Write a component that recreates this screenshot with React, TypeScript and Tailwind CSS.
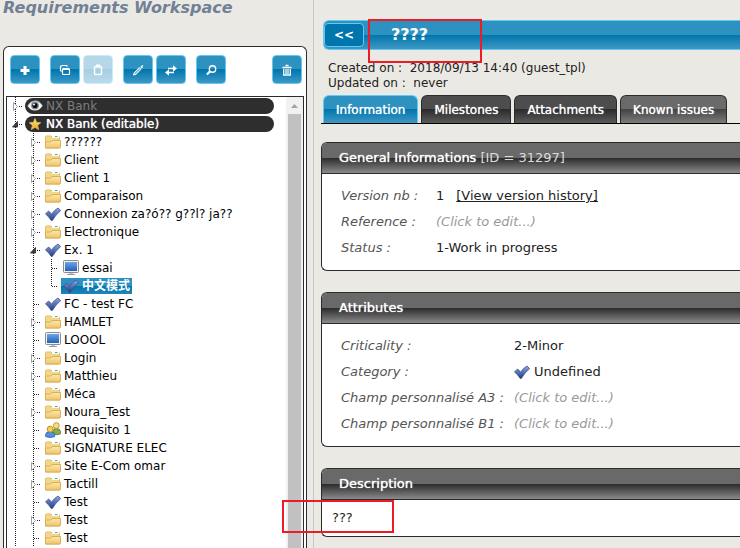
import type {ReactNode} from "react";
import clsx from "clsx";

type IconName = "folder" | "check" | "screen" | "users" | "eye" | "star";
type Toggle = "open" | "closed" | "none";

type Node = {
  label: string;
  icon: IconName;
  toggle: Toggle;
  level: number;
  last?: boolean;
  selected?: boolean;
};

const projects = [
  {label: "NX Bank", icon: "eye", toggle: "closed", muted: true},
  {label: "NX Bank (editable)", icon: "star", toggle: "open", muted: false}
] as const;

const nodes: Node[] = [
  {label: "??????", icon: "folder", toggle: "closed", level: 2},
  {label: "Client", icon: "folder", toggle: "closed", level: 2},
  {label: "Client 1", icon: "folder", toggle: "closed", level: 2},
  {label: "Comparaison", icon: "folder", toggle: "closed", level: 2},
  {label: "Connexion za?ó?? g??l? ja??", icon: "check", toggle: "closed", level: 2},
  {label: "Electronique", icon: "folder", toggle: "closed", level: 2},
  {label: "Ex. 1", icon: "check", toggle: "open", level: 2},
  {label: "essai", icon: "screen", toggle: "none", level: 3},
  {label: "中文模式", icon: "check", toggle: "none", level: 3, last: true, selected: true},
  {label: "FC - test FC", icon: "check", toggle: "none", level: 2},
  {label: "HAMLET", icon: "folder", toggle: "closed", level: 2},
  {label: "LOOOL", icon: "screen", toggle: "none", level: 2},
  {label: "Login", icon: "folder", toggle: "closed", level: 2},
  {label: "Matthieu", icon: "folder", toggle: "closed", level: 2},
  {label: "Méca", icon: "folder", toggle: "none", level: 2},
  {label: "Noura_Test", icon: "folder", toggle: "closed", level: 2},
  {label: "Requisito 1", icon: "users", toggle: "none", level: 2},
  {label: "SIGNATURE ELEC", icon: "folder", toggle: "none", level: 2},
  {label: "Site E-Com omar", icon: "folder", toggle: "closed", level: 2},
  {label: "Tactill", icon: "folder", toggle: "closed", level: 2},
  {label: "Test", icon: "check", toggle: "none", level: 2},
  {label: "Test", icon: "folder", toggle: "closed", level: 2},
  {label: "Test", icon: "folder", toggle: "none", level: 2}
];

// shared gradients, referenced by id from every icon
const Gradients = () => (
  <svg className="absolute size-0" aria-hidden="true">
    <defs>
      <linearGradient id="folderFill" x1="0" y1="0" x2="0" y2="1">
        <stop offset="0" stopColor="#fbe9ad" />
        <stop offset="1" stopColor="#ecc46a" />
      </linearGradient>
      <linearGradient id="checkFill" x1="0" y1="0" x2="0" y2="1">
        <stop offset="0" stopColor="#8fa9dc" />
        <stop offset="0.5" stopColor="#5572b4" />
        <stop offset="1" stopColor="#24397a" />
      </linearGradient>
      <linearGradient id="screenFill" x1="0" y1="0" x2="0" y2="1">
        <stop offset="0" stopColor="#6aa5e8" />
        <stop offset="1" stopColor="#2560b8" />
      </linearGradient>
      <linearGradient id="starFill" x1="0" y1="0" x2="0" y2="1">
        <stop offset="0" stopColor="#ffe58a" />
        <stop offset="1" stopColor="#e8a82c" />
      </linearGradient>
    </defs>
  </svg>
);

const drawings: Record<IconName, ReactNode> = {
  folder: (
    <>
      <path d="M.5 14V3q0-1 1-1H6l1 1h7.500v11z" fill="#f3d68a" stroke="#e3bd68" />
      <path d="M7 2h7v2H7z" fill="#fffbe6" />
      <path d="M10 2h2.500v1H10z" fill="#38a8e0" />
      <path d="M.5 14V8h5.300l1.200-1.500h8.500V13l-.6 1z" fill="url(#folderFill)" stroke="#dcae55" />
    </>
  ),
  check: (
    <path
      d="M.5 8 3.400 5.100Q5.400 6.200 6.500 8.200 9.400 4 13 2L15.700 4.600Q10.500 8.800 7.300 14.500H6.200Q4 10.600.5 8z"
      fill="url(#checkFill)"
      stroke="#3a5090"
      strokeWidth=".8"
      strokeLinejoin="round"
    />
  ),
  screen: (
    <>
      <rect x=".5" y=".5" width="15" height="12" rx="1" fill="#f2f2f2" stroke="#8b8b8b" />
      <rect x="2" y="2" width="12" height="9" fill="url(#screenFill)" />
      <path d="M6 13h4v1H6z" fill="#c5c5c5" />
      <path d="M4 14h8v1H4z" fill="#9a9a9a" />
    </>
  ),
  users: (
    <>
      <path d="M8 11.500V9.500Q8.300 6.600 11 6.400q4.300.1 4.600 3.200v2.200Q12 14 8 11.500z" fill="#86ae4c" stroke="#55792a" strokeWidth=".8" />
      <circle cx="11.300" cy="3.600" r="2.900" fill="#f8dc82" stroke="#bd8d22" strokeWidth=".9" />
      <path d="M.6 14.500v-2Q1 9.700 5 9.600q4.400.1 4.700 3v2Q5 16.500.6 14.500z" fill="#5590df" stroke="#2a5eac" strokeWidth=".8" />
      <circle cx="5.200" cy="7.200" r="3" fill="#f6cd5e" stroke="#b98217" strokeWidth=".9" />
    </>
  ),
  eye: (
    <>
      <path d="M.7 8Q3.500 3 8 3q4.800 0 7.400 5-3 4.600-7.400 4.600Q3.300 12.600.7 8z" fill="#f6f6f6" />
      <circle cx="8" cy="7.500" r="3.900" fill="#7f8d99" />
      <circle cx="8" cy="7.500" r="2.600" fill="#0e1114" />
      <circle cx="7" cy="6.400" r="1" fill="#fff" />
      <path d="M.5 8.200Q3.300 2.800 8 2.800q5 0 7.600 5.400" fill="none" stroke="#aaa" strokeWidth=".9" />
    </>
  ),
  star: (
    <path
      d="M8 2.500 9.600 6.400 13.700 6.700 10.600 9.400 11.600 13.500 8 11.300 4.400 13.500 5.400 9.400 2.300 6.700 6.400 6.400z"
      fill="url(#starFill)"
      stroke="#f6c752"
      strokeWidth=".7"
      strokeLinejoin="round"
    />
  )
};

const Icon = ({name}: {name: IconName}) => (
  <svg className="size-4 shrink-0" viewBox="0 0 16 16" aria-hidden="true">
    {drawings[name]}
  </svg>
);

// one 18px cell of the dotted tree guide
const Guide = ({toggle, last}: {toggle?: Toggle; last?: boolean}) => (
  <svg className="size-[18px] shrink-0" viewBox="0 0 18 18" aria-hidden="true">
    <path d={last ? "M8.500 0V9" : "M8.500 0V18"} stroke="#222" strokeDasharray="1 1" />
    {toggle && (
      <path
        d={toggle === "none" ? "M9 9.500h6" : "M12 9.500h3"}
        stroke="#222"
        strokeDasharray="1 1"
      />
    )}
    {toggle === "closed" && (
      <path d="M6.500 5.500v8L10.500 9.500z" fill="#fff" stroke="#a0a0a0" />
    )}
    {toggle === "open" && (
      <path d="M10.500 6.500v5.500H5.500z" fill="#404040" stroke="#222" strokeWidth=".8" />
    )}
  </svg>
);

const ToolButton = ({
  label,
  className,
  disabled,
  children
}: {
  label: string;
  className?: string;
  disabled?: boolean;
  children: ReactNode;
}) => (
  <button
    type="button"
    aria-label={label}
    disabled={disabled}
    className={clsx(
      "flex h-[29px] w-[30px] shrink-0 items-center justify-center rounded border border-[#63c9f1] bg-[linear-gradient(#2e92c0_50%,#0076ad_50%,#3e98c4)] disabled:opacity-35",
      className
    )}
  >
    <svg className="size-4" viewBox="0 0 16 16" fill="none" stroke="#fff" aria-hidden="true">
      {children}
    </svg>
  </button>
);

const Toolbar = () => (
  <div className="flex pt-2 pr-1 pb-3 pl-1.5">
    <ToolButton label="Add">
      <path d="M8 4v9M3.500 8.500h9" strokeWidth="3" />
    </ToolButton>
    <ToolButton label="Copy" className="ml-2.5">
      <path d="M4.500 9.500 3.500 8.500v-3q0-2 2-2h4l1 1" strokeWidth="1.200" />
      <rect x="5.500" y="6.500" width="7" height="6" rx="1" strokeWidth="1.200" />
      <path d="M6 7.500h6" />
    </ToolButton>
    <ToolButton label="Paste" className="ml-[3px]" disabled>
      <rect x="4.500" y="4.500" width="7" height="8" rx="1" strokeWidth="1.500" />
      <path d="M6 4h4" strokeWidth="3" />
    </ToolButton>
    <ToolButton label="Edit" className="ml-2.5">
      <path d="M3.500 13 4.200 10.700 9.300 5.600 11 7.300 5.900 12.400z" fill="#fff" fillOpacity=".5" />
      <path d="M10.800 4.200l1.700 1.700M12 3.500l.8.800" strokeWidth="1.600" />
    </ToolButton>
    <ToolButton label="Move" className="ml-[3px]">
      <path d="M5 6.500h6M5 10.500h6" strokeWidth="1.600" />
      <path d="M10 3.200 14 6.500l-4 3.300zM6 7.200 2 10.500l4 3.300z" fill="#fff" stroke="none" />
    </ToolButton>
    <ToolButton label="Search" className="ml-2.5">
      <circle cx="9.500" cy="7" r="3.200" strokeWidth="1.400" />
      <path d="M7 9.500 3.800 12.500" strokeWidth="2.300" />
    </ToolButton>
    <ToolButton label="Delete" className="ml-auto">
      <path d="M3.500 5.500h9M6.500 3.500h3" strokeWidth="1.500" />
      <path d="M4.700 7v6h6.600V7M7 7v5M9 7v5" strokeWidth="1.300" />
    </ToolButton>
  </div>
);

const Tree = () => (
  <div className="mx-0.5 flex min-h-0 flex-1 overflow-hidden border border-b-0 border-[#2b2b2b]">
    <ul className="min-w-0 flex-1 text-xs whitespace-nowrap text-black">
      {projects.map((o) => (
        <li key={o.label} className="flex h-[18px]">
          <Guide toggle={o.toggle} />
          <a
            href="#"
            className={clsx(
              "my-px mr-3 flex h-4 flex-1 items-center gap-[3px] rounded-full bg-[#2e2e2e] pl-0.5",
              o.muted ? "text-[#7d7d7d]" : "text-white [text-shadow:0_0_1px_#fff]"
            )}
          >
            <Icon name={o.icon} />
            {o.label}
          </a>
        </li>
      ))}
      {nodes.map((o, i) => (
        <li key={o.label + i} className="flex h-[18px]">
          <Guide />
          {o.level === 3 && <Guide />}
          <Guide toggle={o.toggle} last={o.last} />
          <a
            href="#"
            className={clsx(
              "my-px flex h-4 items-center gap-[3px] pr-0.5 pl-0.5",
              o.selected &&
                "bg-[linear-gradient(#2e92c0_50%,#0076ad_50%,#1e86b8)] font-bold text-white"
            )}
          >
            <Icon name={o.icon} />
            {o.label}
          </a>
        </li>
      ))}
    </ul>
    <div className="w-[17px] shrink-0 bg-[#f1f1f1]">
      <svg className="h-[17px] w-full" viewBox="0 0 17 17" aria-hidden="true">
        <path d="M5 11h7L8.500 7z" fill="#a3a3a3" />
      </svg>
      <div className="mx-0.5 h-full bg-[#c1c1c1]" />
    </div>
  </div>
);

const tabs = [
  {label: "Information", look: "border-[#63c9f1] bg-[linear-gradient(#2e92c0_50%,#0076ad_50%,#3e98c4)]"},
  {label: "Milestones", look: "border-[#2b2b2b] bg-[linear-gradient(#4d4d4d_50%,#2b2b2b_50%,#5a5a5a)]"},
  {label: "Attachments", look: "border-[#2b2b2b] bg-[linear-gradient(#4d4d4d_50%,#2b2b2b_50%,#5a5a5a)]"},
  {label: "Known issues", look: "border-[#2b2b2b] bg-[linear-gradient(#6a6a6a_50%,#444_50%,#7c7c7c)]"}
];

const Panel = ({title, extra, children}: {title: string; extra?: string; children: ReactNode}) => (
  <section className="overflow-hidden rounded-l-md border border-r-0 border-[#2b2b2b] bg-white">
    <h3 className="flex h-[31px] items-center gap-1 border-b border-[#2b2b2b] bg-[linear-gradient(#696969_50%,#2b2b2b_50%,#8a8a8a)] px-[17px] text-[13px] text-white">
      <span className="[text-shadow:0_0_1px_#fff]">{title}</span>
      {extra && <span className="text-[#dcdcdc]">{extra}</span>}
    </h3>
    {children}
  </section>
);

const Fields = ({labelWidth, rows}: {labelWidth: string; rows: [string, ReactNode][]}) => (
  <table className="my-[9px] ml-[19px] text-[13px] text-[#222]">
    <tbody>
      {rows.map(([label, value]) => (
        <tr key={label} className="h-[26px]">
          <th scope="row" className={clsx("p-0 text-left font-normal text-[#555] italic", labelWidth)}>
            {label} :
          </th>
          <td className="p-0">{value}</td>
        </tr>
      ))}
    </tbody>
  </table>
);

const Empty = () => <span className="text-[#999] italic">(Click to edit...)</span>;

const App = () => {
  return (
    <div className="relative flex h-screen overflow-hidden bg-[#ebe9e3] font-['Verdana','DejaVu_Sans','Noto_Sans_CJK_SC',sans-serif]">
      <Gradients />
      <aside className="flex w-[314px] shrink-0 flex-col border-r border-[#c8c8c4] pr-[6px] pl-[3px]">
        <h1 className="h-[46px] text-base leading-4 font-bold whitespace-nowrap text-[#708196] italic">
          Requirements Workspace
        </h1>
        <div className="flex min-h-0 flex-1 flex-col rounded-t-md border border-b-0 border-[#2b2b2b] bg-white">
          <Toolbar />
          <Tree />
        </div>
      </aside>

      <main className="min-w-0 flex-1 pt-5 pl-[7px]">
        <header className="ml-0.5 flex h-[30px] items-center rounded-l-md border border-r-0 border-[#63c9f1] bg-[linear-gradient(#2e92c0_50%,#0076ad_50%,#3e98c4)] text-white">
          <button
            type="button"
            className="h-6 w-10 rounded border border-[#63c9f1] bg-[#0076ad] text-xs font-bold"
          >
            &lt;&lt;
          </button>
          <h2 className="ml-[27px] text-base font-bold">????</h2>
        </header>
        <div className="mt-[11px] ml-[7px] text-xs leading-[15px] whitespace-pre text-[#222]">
          <p>Created on :  2018/09/13 14:40 (guest_tpl)</p>
          <p>Updated on :  never</p>
        </div>
        <nav className="mt-1 flex gap-[3px] border-b border-black pl-0.5">
          {tabs.map((o) => (
            <button
              key={o.label}
              type="button"
              className={clsx(
                "h-7 rounded-t-md border border-b-0 px-3 text-xs whitespace-nowrap text-white [text-shadow:0_0_1px_#fff]",
                o.look
              )}
            >
              {o.label}
            </button>
          ))}
        </nav>
        <div className="mt-[18px] flex flex-col gap-[21px]">
          <Panel title="General Informations" extra="[ID = 31297]">
            <Fields
              labelWidth="w-[95px]"
              rows={[
                [
                  "Version nb",
                  <>
                    1
                    <a href="#" className="ml-3 underline">
                      [View version history]
                    </a>
                  </>
                ],
                ["Reference", <Empty />],
                ["Status", "1-Work in progress"]
              ]}
            />
          </Panel>
          <Panel title="Attributes">
            <Fields
              labelWidth="w-[173px]"
              rows={[
                ["Criticality", "2-Minor"],
                [
                  "Category",
                  <span className="flex items-center gap-1">
                    <Icon name="check" />
                    Undefined
                  </span>
                ],
                ["Champ personnalisé A3", <Empty />],
                ["Champ personnalisé B1", <Empty />]
              ]}
            />
          </Panel>
          <Panel title="Description">
            <p className="px-2.5 py-2 text-[13px] leading-5 text-[#222]">???</p>
          </Panel>
        </div>
      </main>

      {/* review marks lying over the page */}
      <div className="pointer-events-none absolute top-[19px] left-[368px] h-11 w-[114px] border-2 border-[#ed1c24]" />
      <div className="pointer-events-none absolute top-[500px] left-[282px] h-[33px] w-28 border-2 border-[#ed1c24]" />
    </div>
  );
};

export default App;
